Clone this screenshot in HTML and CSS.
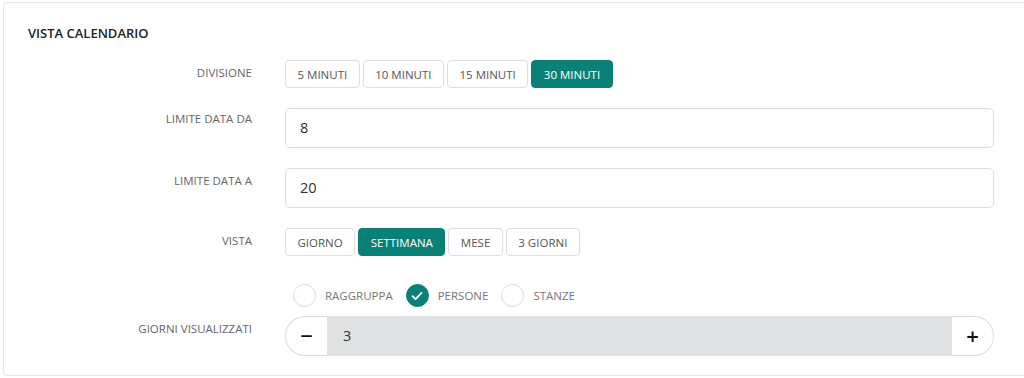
FILE: index.html
```html
<!DOCTYPE html>
<html>
<head>
  <title>Vista calendario</title>
  <link rel="stylesheet" href="styles.css">
</head>
<body>
  <div class="card">
    <h3 class="title">VISTA CALENDARIO</h3>

    <div class="row">
      <div class="label">DIVISIONE</div>
      <div class="btn-group">
        <button class="btn">5 MINUTI</button>
        <button class="btn">10 MINUTI</button>
        <button class="btn">15 MINUTI</button>
        <button class="btn active">30 MINUTI</button>
      </div>
    </div>

    <div class="row">
      <div class="label label-high">LIMITE DATA DA</div>
      <div class="field">8</div>
    </div>

    <div class="row">
      <div class="label">LIMITE DATA A</div>
      <div class="field">20</div>
    </div>

    <div class="row">
      <div class="label">VISTA</div>
      <div class="btn-group">
        <button class="btn">GIORNO</button>
        <button class="btn active">SETTIMANA</button>
        <button class="btn">MESE</button>
        <button class="btn">3 GIORNI</button>
      </div>
    </div>

    <div class="row row-radios">
      <div class="label"></div>
      <div class="radios">
        <span class="radio"></span><span class="radio-text">RAGGRUPPA</span>
        <span class="radio checked">
          <svg width="12" height="10" viewBox="0 0 12 10"><path d="M1.5 5.2 L4.6 8.2 L10.5 1.8" fill="none" stroke="#fff" stroke-width="1.8" stroke-linecap="round" stroke-linejoin="round"/></svg>
        </span><span class="radio-text">PERSONE</span>
        <span class="radio"></span><span class="radio-text">STANZE</span>
      </div>
    </div>

    <div class="row">
      <div class="label">GIORNI VISUALIZZATI</div>
      <div class="stepper">
        <div class="step step-left">&minus;</div>
        <div class="step-value">3</div>
        <div class="step step-right">+</div>
      </div>
    </div>
  </div>
</body>
</html>
```

FILE: styles.css
```css
body {
  margin: 0;
  font-family: "Open Sans", Arial, sans-serif;
  background-color: #fff;
  overflow: hidden;
}

.card {
  margin: 2px -20px 0 3px;
  padding: 21px 0 16px 24px;
  border: 1px solid #e6e6e6;
  border-radius: 4px;
  height: 335px;
}

.title {
  margin: 0 0 18px 0;
  font-size: 13px;
  font-weight: 600;
  color: #222;
  line-height: 18px;
}

.row {
  display: grid;
  grid-template-columns: 224px 709px;
  column-gap: 33px;
  margin-bottom: 20px;
}

.label {
  text-align: right;
  font-size: 11.5px;
  color: #666;
  padding-top: 5px;
  line-height: 16px;
}

.label-high {
  padding-top: 3px;
}

.btn-group {
  display: flex;
  gap: 3px;
}

.btn {
  height: 28px;
  padding: 0 11.5px;
  font-family: "Open Sans", Arial, sans-serif;
  font-size: 11.5px;
  color: #555;
  background-color: #fff;
  border: 1px solid #dedede;
  border-radius: 4px;
}

.btn.active {
  background-color: #0a8176;
  border-color: #0a8176;
  color: #fff;
}

.field {
  height: 38px;
  border: 1px solid #dcdcdc;
  border-radius: 5px;
  padding-left: 14px;
  font-size: 14.5px;
  line-height: 38px;
  color: #333;
}

.row-radios {
  margin-top: 28px;
  margin-bottom: 9px;
}

.radios {
  display: flex;
  align-items: center;
  padding-left: 8px;
}

.radio {
  width: 21px;
  height: 21px;
  border: 1px solid #dcdcdc;
  border-radius: 50%;
  display: flex;
  align-items: center;
  justify-content: center;
}

.radio.checked {
  background-color: #0a8176;
  border-color: #0a8176;
}

.radio-text {
  font-size: 11.5px;
  color: #777;
  margin: 0 13px 0 9px;
}

.stepper {
  display: flex;
  height: 40px;
}

.step {
  width: 41px;
  background-color: #fff;
  border: 1px solid #dcdcdc;
  font-size: 22px;
  font-weight: 600;
  line-height: 36px;
  text-align: center;
  color: #111;
}

.step-left {
  border-right: none;
  border-radius: 20px 0 0 20px;
}

.step-right {
  border-left: none;
  border-radius: 0 20px 20px 0;
}

.step-value {
  flex: 1;
  background-color: #e0e1e2;
  padding-left: 16px;
  font-size: 14.5px;
  line-height: 40px;
  color: #333;
}
```
